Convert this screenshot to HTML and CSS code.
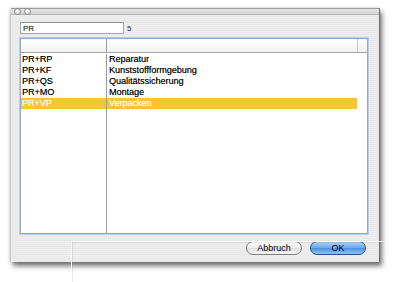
FILE: index.html
```html
<!DOCTYPE html>
<html>
<head>
	<meta http-equiv="Content-Type" content="text/html; charset=utf-8" />
	<title>Auswahl</title>
	<link rel="stylesheet" href="styles.css">
</head>
<body>
	<!-- Dialogfenster -->
	<div class="window">
		<div class="titlebar">
			<span class="dot"></span>
			<span class="dot"></span>
		</div>
		<div class="content">
			<div class="search-row">
				<div class="field">PR</div>
				<span class="count">5</span>
			</div>
			<div class="list">
				<div class="list-head">
					<div class="col-a"></div>
					<div class="col-b"></div>
					<div class="col-c"></div>
				</div>
				<div class="rows">
					<div class="row"><div class="col-a">PR+RP</div><div class="col-b">Reparatur</div></div>
					<div class="row"><div class="col-a">PR+KF</div><div class="col-b">Kunststoffformgebung</div></div>
					<div class="row"><div class="col-a">PR+QS</div><div class="col-b">Qualitätssicherung</div></div>
					<div class="row"><div class="col-a">PR+MO</div><div class="col-b">Montage</div></div>
					<div class="row selected"><div class="col-a">PR+VP</div><div class="col-b">Verpacken</div></div>
					<div class="filler"><div class="col-a"></div><div class="col-b"></div></div>
				</div>
			</div>
			<div class="buttons">
				<button class="btn">Abbruch</button>
				<button class="btn default">OK</button>
			</div>
		</div>
	</div>
	<!-- Hilfslinien -->
	<div class="guide-h"></div>
	<div class="guide-v"></div>
</body>
</html>
```

FILE: styles.css
```css
body {
	margin: 0;
	width: 399px;
	height: 282px;
	background: #fff;
	font-family: "Liberation Sans", Arial, sans-serif;
	overflow: hidden;
}

.window {
	margin: 8px 0 0 11px;
	width: 368px;
	height: 253px;
	border-top: 1px solid #9a9a9a;
	border-right: 1px solid #6a6a6a;
	background: repeating-linear-gradient(#eeeeee 0, #eeeeee 1px, #e8e8e8 1px, #e8e8e8 2px);
	box-shadow: 2px 4px 5px rgba(0, 0, 0, 0.55), -1px 0 3px rgba(0, 0, 0, 0.2);
	display: flex;
	flex-direction: column;
}

.titlebar {
	height: 5px;
	border-bottom: 1px solid #b4b4b4;
	background: linear-gradient(#e6e6e6, #d4d4d4);
	display: flex;
	align-items: flex-start;
	gap: 3px;
	padding-left: 3px;
}

.dot {
	width: 7px;
	height: 7px;
	box-sizing: border-box;
	border-radius: 50%;
	border: 1px solid #8c8c8c;
	background: radial-gradient(circle at 50% 35%, #ffffff, #d8d8d8);
	margin-top: -1px;
}

.content {
	flex: 1;
	display: flex;
	flex-direction: column;
	padding: 7px 13px 0 9px;
}

.search-row {
	display: flex;
	align-items: center;
	height: 12px;
}

.field {
	width: 100px;
	height: 10px;
	border: 1px solid #a8a8a8;
	border-top-color: #8c8c8c;
	background: #fff;
	font-size: 8px;
	line-height: 11px;
	padding-left: 2px;
	box-sizing: content-box;
	color: #000;
}

.count {
	margin-left: 3px;
	font-size: 8px;
	color: #1a2a55;
}

.list {
	margin-top: 4px;
	width: 346px;
	height: 194px;
	border: 1px solid #8ea8cf;
	box-shadow: 0 0 0 1px #bccde6;
	background: #fff;
	display: flex;
	flex-direction: column;
}

.list-head {
	height: 13px;
	display: flex;
	border-bottom: 1px solid #a4a4a4;
	background: linear-gradient(#ffffff, #f2f2f2);
}

.col-a {
	width: 84px;
	border-right: 1px solid #9c9c9c;
	padding-left: 1px;
}

.col-b {
	width: 248px;
	padding-left: 2px;
}

.col-c {
	flex: 1;
	border-left: 1px solid #c8c8c8;
}

.rows {
	flex: 1;
	display: flex;
	flex-direction: column;
	padding-top: 1px;
	font-size: 9px;
	color: #000;
	text-shadow: 0.3px 0 0 rgba(0, 0, 0, 0.6);
}

.row {
	height: 11px;
	line-height: 11px;
	display: flex;
	width: 336px;
}

.row .col-a,
.filler .col-a {
	width: 84px;
}

.row.selected {
	background: #f5c535;
	color: #fff;
	text-shadow: 0.3px 0 0 rgba(255, 255, 255, 0.6);
}

.filler {
	flex: 1;
	display: flex;
}

.buttons {
	display: flex;
	justify-content: flex-end;
	gap: 8px;
	margin-top: 7px;
}

.btn {
	width: 56px;
	height: 14px;
	padding: 0;
	border: 1px solid #7a7a7a;
	border-radius: 7px;
	background: linear-gradient(#ffffff 0%, #ececec 50%, #dcdcdc 51%, #f8f8f8 100%);
	font-family: "Liberation Sans", Arial, sans-serif;
	font-size: 9px;
	line-height: 12px;
	color: #000;
}

.btn.default {
	border-color: #2b4f8c;
	background: linear-gradient(#a9cff5 0%, #6fa9e9 50%, #4b8fe0 51%, #8cc6f7 100%);
}

.guide-h {
	position: absolute;
	left: 71px;
	top: 241px;
	width: 314px;
	height: 1px;
	background: #fff;
	box-shadow: 0 1px 0 rgba(0, 0, 0, 0.08);
}

.guide-v {
	position: absolute;
	left: 71px;
	top: 241px;
	width: 1px;
	height: 41px;
	background: #fff;
	box-shadow: 1px 0 0 rgba(0, 0, 0, 0.08);
}
```
